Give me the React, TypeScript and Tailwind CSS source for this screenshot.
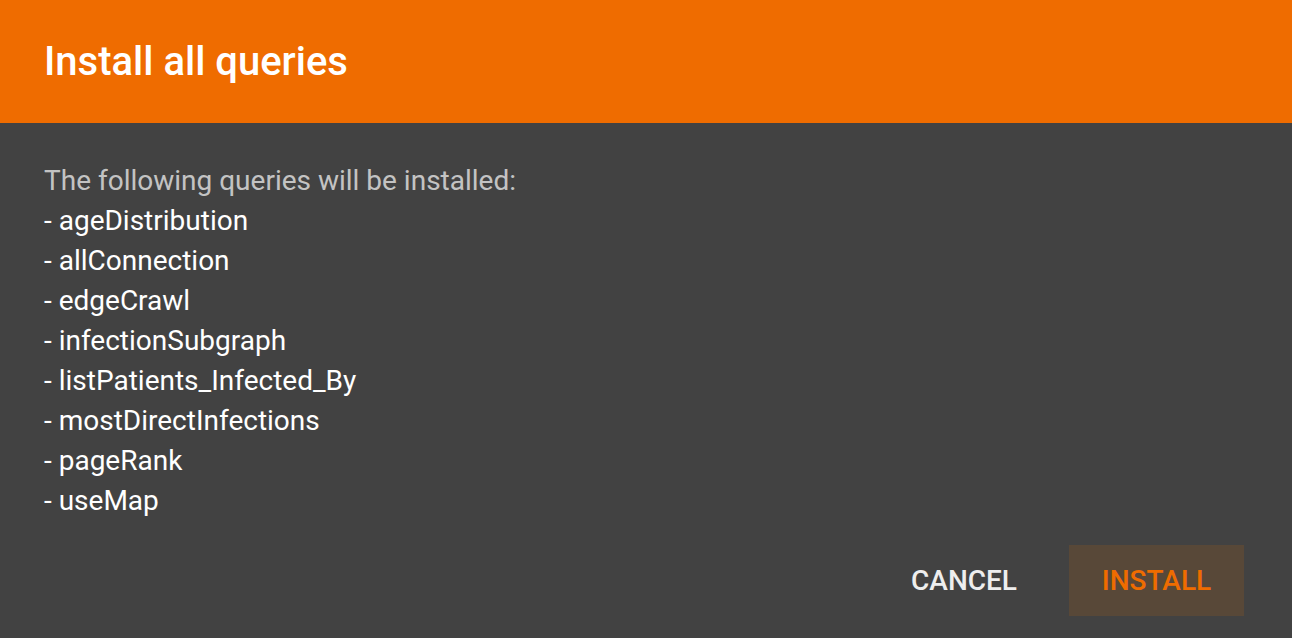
const queries = [
  'ageDistribution',
  'allConnection',
  'edgeCrawl',
  'infectionSubgraph',
  'listPatients_Infected_By',
  'mostDirectInfections',
  'pageRank',
  'useMap',
];

export default function App() {
  return (
    <div className="h-[638px] w-[1292px] flex flex-col bg-[#424242] font-['Roboto',sans-serif]">
      {/* Title bar */}
      <div className="h-[123px] shrink-0 flex items-center bg-[#ef6c00] px-[44px]">
        <h1 className="text-[40px] font-medium text-white leading-none">Install all queries</h1>
      </div>

      {/* Content */}
      <div className="flex-1 px-[44px] pt-[38px]">
        <p className="text-[28px] leading-[40px] text-white/70">The following queries will be installed:</p>
        {queries.map((q) => (
          <p key={q} className="text-[28px] leading-[40px] text-white">- {q}</p>
        ))}
      </div>

      {/* Actions */}
      <div className="flex justify-end items-center gap-[52px] px-[48px] pb-[22px]">
        <button className="text-[28px] font-medium text-[#eeeeee] uppercase">Cancel</button>
        <button className="h-[71px] w-[175px] bg-[#584838] text-[28px] font-medium text-[#ef6c00] uppercase">Install</button>
      </div>
    </div>
  );
}
